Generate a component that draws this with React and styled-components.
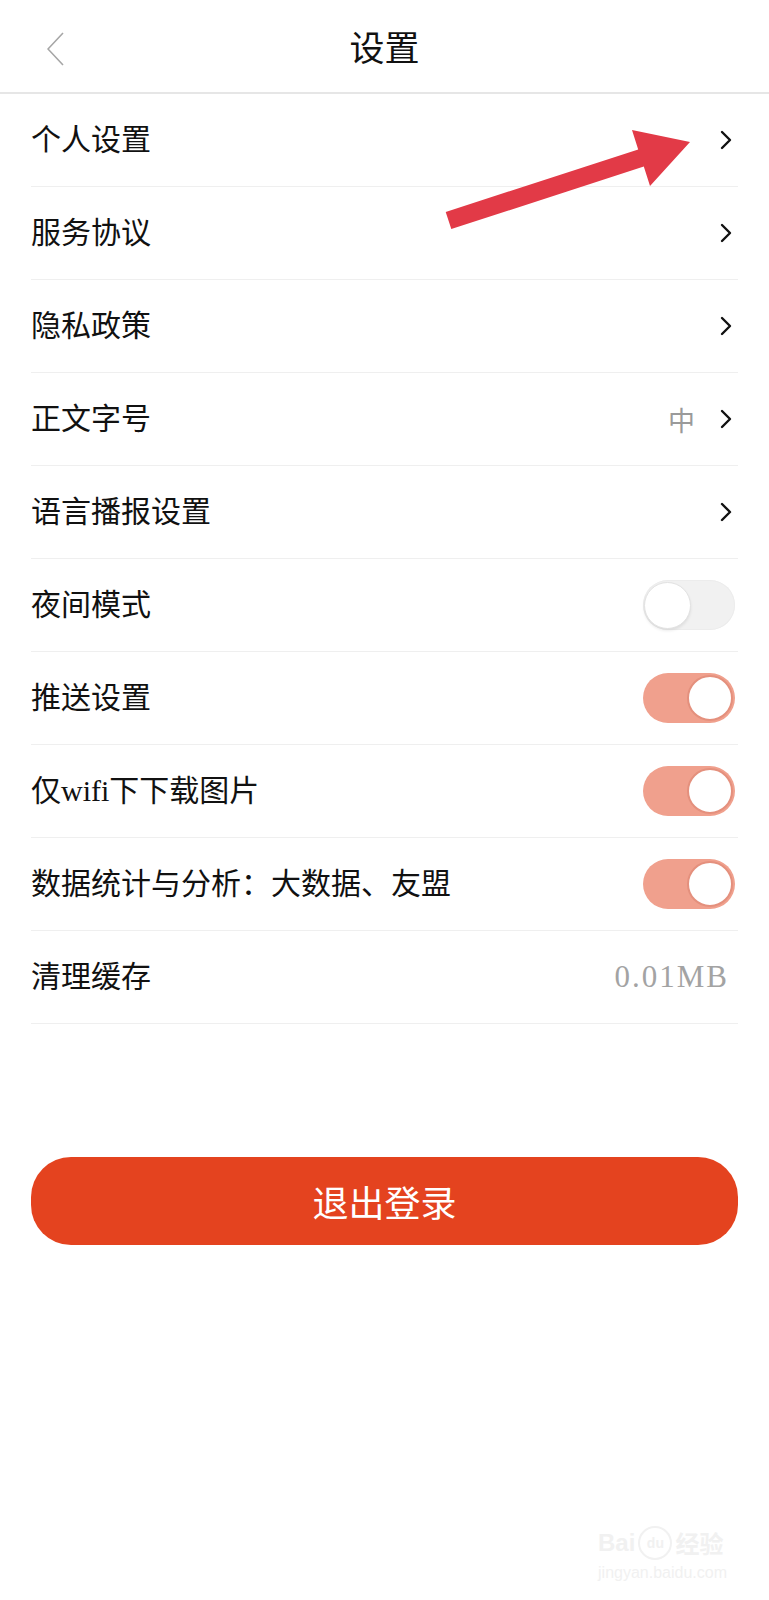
import React from 'react'
import styled, { createGlobalStyle } from 'styled-components'

const GlobalStyle = createGlobalStyle`
  html, body {
    margin: 0;
    padding: 0;
    background: #fff;
  }
  body {
    font-family: "Liberation Serif", "Noto Sans CJK SC", serif;
    color: #111;
  }
`

const rows = [
  { label: '个人设置', type: 'link' },
  { label: '服务协议', type: 'link' },
  { label: '隐私政策', type: 'link' },
  { label: '正文字号', type: 'link', value: '中' },
  { label: '语言播报设置', type: 'link' },
  { label: '夜间模式', type: 'toggle', on: false },
  { label: '推送设置', type: 'toggle', on: true },
  { label: '仅wifi下下载图片', type: 'toggle', on: true },
  { label: '数据统计与分析：大数据、友盟', type: 'toggle', on: true },
  { label: '清理缓存', type: 'cache', value: '0.01MB' },
]

function Chevron() {
  return (
    <ChevronIcon width="14" height="22" viewBox="0 0 14 22">
      <polyline points="3,3 11,11 3,19" fill="none" stroke="#111" strokeWidth="2.4" strokeLinecap="round" strokeLinejoin="round" />
    </ChevronIcon>
  )
}

function App() {
  return (
    <Page>
      <GlobalStyle />
      <Header>
        <BackButton>
          <svg width="18" height="34" viewBox="0 0 18 34">
            <polyline points="16,1 1,17 16,33" fill="none" stroke="#a6a6a6" strokeWidth="1.6" />
          </svg>
        </BackButton>
        <Title>设置</Title>
      </Header>

      <List>
        {rows.map((row) => (
          <Row key={row.label}>
            <Label>{row.label}</Label>
            {row.type === 'link' && (
              <Right>
                {row.value && <Value>{row.value}</Value>}
                <Chevron />
              </Right>
            )}
            {row.type === 'toggle' && (
              <Toggle $on={row.on}>
                <Knob $on={row.on} />
              </Toggle>
            )}
            {row.type === 'cache' && <CacheSize>{row.value}</CacheSize>}
          </Row>
        ))}
      </List>

      <LogoutButton>退出登录</LogoutButton>

      {/* red annotation arrow drawn on top of the screenshot */}
      <Annotation width="769" height="1600" viewBox="0 0 769 1600">
        <polygon
          points="445.7,211.9 638.2,149.4 632,130 690,142 650,186 643.8,166.6 451.3,229.1"
          fill="#e23a47"
        />
      </Annotation>

      <Watermark>
        <MarkTop>
          <span>Bai</span>
          <Paw>du</Paw>
          <span>经验</span>
        </MarkTop>
        <MarkUrl>jingyan.baidu.com</MarkUrl>
      </Watermark>
    </Page>
  )
}

export default App

const Page = styled.div`
  position: relative;
  width: 769px;
  min-height: 1600px;
  background: #fff;
  overflow: hidden;
`

const Header = styled.div`
  height: 92px;
  display: flex;
  align-items: center;
  justify-content: center;
  position: relative;
  border-bottom: 2px solid #e6e6e6;
`

const BackButton = styled.div`
  position: absolute;
  left: 47px;
  top: 32px;
  width: 18px;
  height: 34px;
  display: flex;
`

const Title = styled.div`
  font-family: "Noto Sans CJK SC", sans-serif;
  font-size: 35px;
  font-weight: 400;
  color: #111;
  margin-top: -2px;
`

const List = styled.div`
  margin: 0 31px;
  display: flex;
  flex-direction: column;
`

const Row = styled.div`
  height: 92px;
  display: flex;
  align-items: center;
  justify-content: space-between;
  border-bottom: 1.5px solid #efefef;
`

const Label = styled.div`
  font-family: "Liberation Serif", "Noto Sans CJK SC", serif;
  font-size: 30px;
  color: #111;
  line-height: 1;
`

const Right = styled.div`
  display: flex;
  align-items: center;
  gap: 24px;
  padding-right: 5px;
`

const Value = styled.span`
  font-family: "Noto Sans CJK SC", sans-serif;
  font-size: 27px;
  color: #9a9a9a;
`

const ChevronIcon = styled.svg`
  display: block;
`

const Toggle = styled.div`
  width: 92px;
  height: 50px;
  box-sizing: border-box;
  border-radius: 25px;
  margin-right: 3px;
  padding: ${(p) => (p.$on ? '2px' : '1px')};
  display: flex;
  align-items: center;
  justify-content: ${(p) => (p.$on ? 'flex-end' : 'flex-start')};
  background: ${(p) => (p.$on ? '#f0a08d' : '#f1f1f1')};
  box-shadow: ${(p) => (p.$on ? 'none' : 'inset 0 0 0 1px #ececec')};
`

const Knob = styled.div`
  width: ${(p) => (p.$on ? '46px' : '47px')};
  height: ${(p) => (p.$on ? '46px' : '47px')};
  border-radius: 50%;
  background: #fff;
  box-sizing: border-box;
  border: ${(p) => (p.$on ? '2px solid #e4907d' : '1px solid #e2e2e2')};
  box-shadow: ${(p) => (p.$on ? 'none' : '0 2px 3px rgba(0,0,0,0.08)')};
`

const CacheSize = styled.span`
  font-family: "Liberation Serif", serif;
  font-size: 31px;
  letter-spacing: 2px;
  color: #a3a3a3;
  padding-right: 9px;
`

const LogoutButton = styled.button`
  display: flex;
  align-items: center;
  justify-content: center;
  width: 707px;
  height: 88px;
  margin: 133px 31px 0;
  border: none;
  border-radius: 40px;
  background: #e4431f;
  color: #fff;
  font-family: "Liberation Serif", "Noto Sans CJK SC", serif;
  font-size: 36px;
  cursor: pointer;
`

const Annotation = styled.svg`
  position: absolute;
  left: 0;
  top: 0;
  pointer-events: none;
`

const Watermark = styled.div`
  position: absolute;
  right: 42px;
  bottom: 18px;
  display: flex;
  flex-direction: column;
  align-items: flex-start;
  color: #f1f1f1;
  pointer-events: none;
`

const MarkTop = styled.div`
  display: flex;
  align-items: center;
  gap: 3px;
  font-family: "Liberation Sans", "Noto Sans CJK SC", sans-serif;
  font-size: 24px;
  font-weight: 700;
`

const Paw = styled.span`
  display: inline-flex;
  align-items: center;
  justify-content: center;
  width: 30px;
  height: 30px;
  border-radius: 50%;
  border: 2px solid #f1f1f1;
  font-size: 14px;
`

const MarkUrl = styled.div`
  font-family: "Liberation Sans", sans-serif;
  font-size: 16px;
  margin-top: 4px;
`
